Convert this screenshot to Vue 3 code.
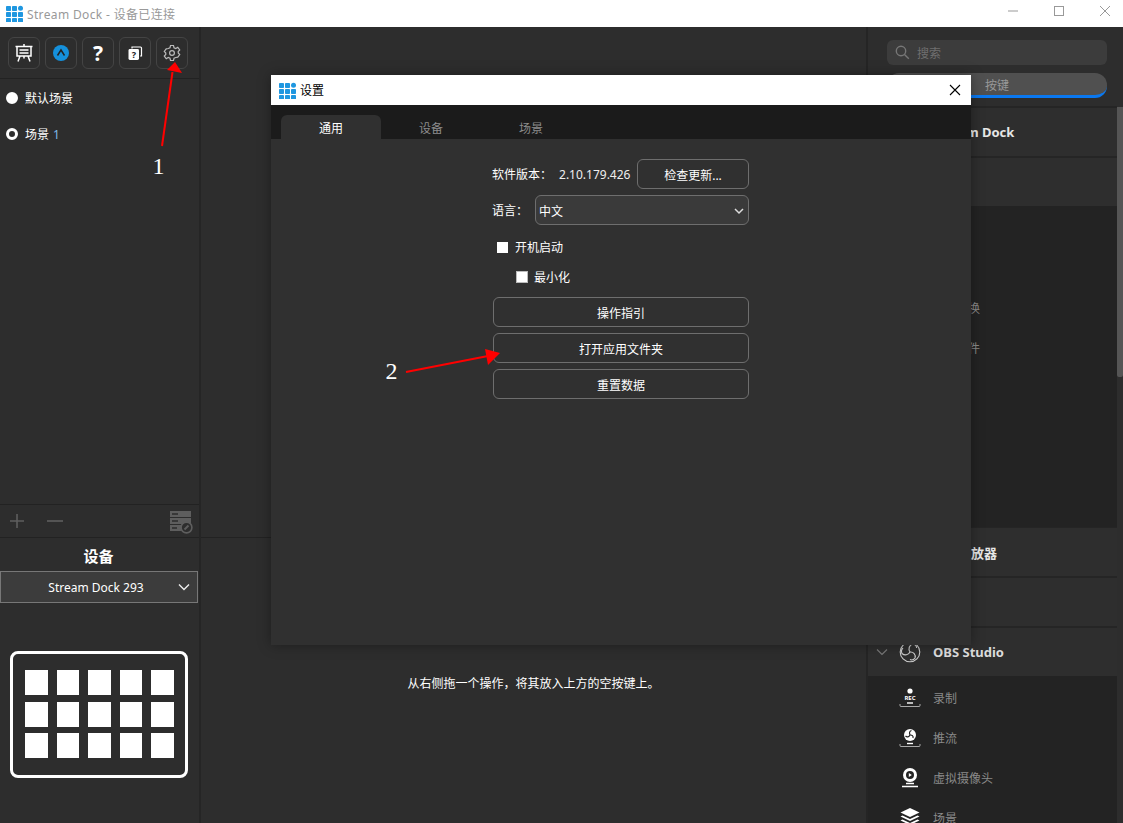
<script setup>
const scenes = [
  { name: '默认场景', filled: true },
  { name: '场景', num: '1', filled: false }
];
const keys = Array.from({ length: 15 }, (_, i) => i);
const tabs = ['通用', '设备', '场景'];
const actionButtons = ['操作指引', '打开应用文件夹', '重置数据'];
const logoCells = [
  [0, 0], [6, 0], [0, 6], [6, 6], [12, 6], [0, 12], [6, 12], [12, 12]
];
const groups = [
  { title: 'Stream Dock', open: false },
  { title: '', open: true, items: ['', '', '场景切换', '打开文件', '', '', '', ''] },
  { title: '媒体播放器', open: false },
  { title: '', open: false }
];
</script>

<template>
  <div class="app">
    <header class="titlebar">
      <svg class="logo" width="17" height="17" viewBox="0 0 17 17">
        <rect v-for="(c, i) in logoCells" :key="i" :x="c[0]" :y="c[1] + 1" width="5" height="5" rx="0.8" fill="#1f97e0" />
        <circle cx="14.5" cy="3.2" r="2.5" fill="#1f97e0" />
      </svg>
      <span class="app-title">Stream Dock - 设备已连接</span>
      <div class="win-controls">
        <svg width="12" height="12" viewBox="0 0 12 12"><path d="M1 6h10" stroke="#999" fill="none" /></svg>
        <svg width="12" height="12" viewBox="0 0 12 12"><rect x="1.5" y="1.5" width="9" height="9" stroke="#999" fill="none" /></svg>
        <svg width="12" height="12" viewBox="0 0 12 12"><path d="M1 1l10 10M11 1L1 11" stroke="#999" fill="none" /></svg>
      </div>
    </header>

    <main class="body">
      <aside class="left">
        <div class="toolbar">
          <button class="tool">
            <svg width="20" height="20" viewBox="0 0 20 20" fill="none" stroke="#fff" stroke-width="1.5">
              <path d="M10 1v2.500M1.500 3.500h17M3 3.500v9.500h14V3.500M6 13l-2 5.500M14 13l2 5.500M10 13v2.500" />
              <path d="M5.500 7h9M5.500 10h9" />
            </svg>
          </button>
          <button class="tool">
            <svg width="18" height="18" viewBox="0 0 18 18">
              <circle cx="9" cy="9" r="8" fill="#1590db" />
              <path d="M5.500 11.500L9 6l3.500 5.500" fill="none" stroke="#222" stroke-width="1.500" />
            </svg>
          </button>
          <button class="tool qmark">?</button>
          <button class="tool">
            <svg width="16" height="16" viewBox="0 0 16 16">
              <path d="M5 3.500V2h8.500a1 1 0 0 1 1 1v8h-1.400" fill="none" stroke="#fff" stroke-width="1.200" />
              <rect x="1.500" y="4" width="10.500" height="11" rx="1.400" fill="#fff" />
              <text x="6.800" y="13" class="doc-q">?</text>
            </svg>
          </button>
          <button class="tool">
            <svg width="18" height="18" viewBox="0 0 24 24" fill="none" stroke="#bbb" stroke-width="1.600">
              <circle cx="12" cy="12" r="3.200" />
              <path d="M10 2h4l.7 3 2.300 1 2.700-1.600 2.600 3.400-2 2.200v2l2 2.200-2.600 3.400L17 18l-2.300 1-.7 3h-4l-.7-3L7 18l-2.700 1.600-2.600-3.400 2-2.200v-2l-2-2.200 2.600-3.400L7 6l2.300-1z" />
            </svg>
          </button>
        </div>

        <ul class="scenes">
          <li v-for="s in scenes" :key="s.name" class="scene">
            <span class="dot" :class="{ filled: s.filled }"></span>
            <span>{{ s.name }}</span>
            <span v-if="s.num" class="scene-num">{{ s.num }}</span>
          </li>
        </ul>

        <div class="scene-bar">
          <svg width="16" height="16" viewBox="0 0 16 16"><path d="M8 1v14M1 8h14" stroke="#5e5e5e" stroke-width="1.600" /></svg>
          <svg class="minus" width="16" height="16" viewBox="0 0 16 16"><path d="M0 8h16" stroke="#5e5e5e" stroke-width="1.600" /></svg>
          <svg class="store" width="24" height="24" viewBox="0 0 24 24">
            <rect x="1" y="1" width="21" height="6" fill="#5e5e5e" />
            <rect x="1" y="8" width="21" height="6" fill="#5e5e5e" />
            <rect x="1" y="15" width="14" height="6" fill="#5e5e5e" />
            <path d="M3 4h6M3 11h6M3 18h5" stroke="#2d2d2d" stroke-width="1.400" />
            <circle cx="17.500" cy="17.500" r="5.400" fill="#2d2d2d" stroke="#5e5e5e" stroke-width="1.600" />
            <path d="M15.500 19.500l4-4" stroke="#5e5e5e" stroke-width="2" />
          </svg>
        </div>

        <section class="device">
          <h3 class="device-title">设备</h3>
          <div class="device-select">
            <span>Stream Dock 293</span>
            <svg width="12" height="8" viewBox="0 0 12 8"><path d="M1 1.500l5 5 5-5" fill="none" stroke="#eee" stroke-width="1.400" /></svg>
          </div>
          <div class="deck">
            <span v-for="k in keys" :key="k" class="deck-key"></span>
          </div>
        </section>
      </aside>

      <section class="center">
        <div class="canvas"></div>
        <div class="hint-area">
          <p class="hint">从右侧拖一个操作，将其放入上方的空按键上。</p>
        </div>
      </section>

      <aside class="right">
        <div class="right-top">
          <div class="search">
            <svg width="15" height="15" viewBox="0 0 15 15" fill="none" stroke="#777" stroke-width="1.400">
              <circle cx="6" cy="6" r="4.700" /><path d="M9.500 9.500l4.300 4.300" />
            </svg>
            <span>搜索</span>
          </div>
          <div class="pill"><span>按键</span></div>
        </div>

        <div class="groups">
          <template v-for="(g, i) in groups" :key="i">
            <div class="group-head">{{ g.title }}</div>
            <div v-if="g.open" class="group-list">
              <div v-for="(item, j) in g.items" :key="j" class="group-item">{{ item }}</div>
            </div>
          </template>

          <div class="group-head obs-head">
            <svg class="chev" width="12" height="8" viewBox="0 0 12 8"><path d="M1 1.500l5 5 5-5" fill="none" stroke="#777" stroke-width="1.200" /></svg>
            <svg width="22" height="22" viewBox="0 0 22 22" fill="none" stroke="#ccc" stroke-width="1.100">
              <circle cx="11" cy="11" r="9.800" />
              <path d="M11 11c-2-3-1-7 3-8 2.500.6 3.600 2.400 3.600 4" />
              <path d="M11 11c3.500-.3 6 2.500 5 6-1.400 2-3.400 2.300-5 1.600" />
              <path d="M11 11c-1.600 3-5.200 4-8 1.500-1-2.200-.4-4.200 1-5.500" />
            </svg>
            <span>OBS Studio</span>
          </div>
          <div class="group-list obs-list">
            <div class="group-item with-icon">
              <svg width="22" height="20" viewBox="0 0 22 20">
                <circle cx="11" cy="3" r="2.600" fill="#fff" />
                <text x="11" y="12" class="rec">REC</text>
                <path d="M8 15h6" stroke="#fff" stroke-width="1.400" />
                <path d="M1 16v1.500q0 1 1 1h18q1 0 1-1V16" fill="none" stroke="#ccc" stroke-width="0.800" />
              </svg>
              <span>录制</span>
            </div>
            <div class="group-item with-icon">
              <svg width="22" height="20" viewBox="0 0 22 20">
                <circle cx="11" cy="7" r="6" fill="#fff" />
                <path d="M11 7c-1-2-.5-4 1.500-4.500M11 7c2-.2 3.500 1 3 3M11 7c-1 2-3 2.500-4.500 1" fill="none" stroke="#232323" stroke-width="1.200" />
                <path d="M8 15.500h6" stroke="#fff" stroke-width="1.400" />
                <path d="M1 16v1.500q0 1 1 1h18q1 0 1-1V16" fill="none" stroke="#ccc" stroke-width="0.800" />
              </svg>
              <span>推流</span>
            </div>
            <div class="group-item with-icon">
              <svg width="22" height="20" viewBox="0 0 22 20">
                <circle cx="11" cy="7" r="7" fill="#fff" />
                <circle cx="11" cy="7" r="4" fill="#232323" />
                <path d="M9.800 5v4l3-2z" fill="#fff" />
                <path d="M7 15.500h8M3 18.500h16" stroke="#fff" stroke-width="1.500" />
              </svg>
              <span>虚拟摄像头</span>
            </div>
            <div class="group-item with-icon">
              <svg width="22" height="20" viewBox="0 0 22 20" fill="#fff">
                <path d="M11 0l9.500 4.500L11 9 1.500 4.500z" />
                <path d="M3.500 7.500L11 11l7.500-3.500 2 1L11 13 1.500 8.500z" />
                <path d="M3.500 11.500L11 15l7.500-3.500 2 1L11 17 1.500 12.500z" />
              </svg>
              <span>场景</span>
            </div>
          </div>
        </div>
        <div class="scroll-thumb"></div>
      </aside>
    </main>

    <!-- 设置弹窗 -->
    <div class="dialog">
      <div class="dialog-title">
        <svg width="17" height="17" viewBox="0 0 17 17">
          <rect v-for="(c, i) in logoCells" :key="i" :x="c[0]" :y="c[1] + 1" width="5" height="5" rx="0.8" fill="#1f97e0" />
          <circle cx="14.500" cy="3.200" r="2.500" fill="#1f97e0" />
        </svg>
        <span>设置</span>
        <svg class="dialog-close" width="12" height="12" viewBox="0 0 12 12"><path d="M1 1l10 10M11 1L1 11" stroke="#000" stroke-width="1.100" fill="none" /></svg>
      </div>
      <div class="dialog-tabs">
        <div v-for="(t, i) in tabs" :key="t" class="dialog-tab" :class="{ active: i === 0 }">{{ t }}</div>
      </div>
      <div class="dialog-body">
        <div class="form">
          <div class="row version-row">
            <span>软件版本：</span>
            <span class="version">2.10.179.426</span>
            <button class="btn update">检查更新...</button>
          </div>
          <div class="row lang-row">
            <span>语言：</span>
            <div class="lang-select">
              <span>中文</span>
              <svg width="10" height="7" viewBox="0 0 10 7"><path d="M1 1l4 4 4-4" fill="none" stroke="#ddd" stroke-width="1.500" /></svg>
            </div>
          </div>
          <label class="check check-main"><span class="box"></span>开机启动</label>
          <label class="check check-sub"><span class="box"></span>最小化</label>
          <div class="actions">
            <button v-for="b in actionButtons" :key="b" class="btn">{{ b }}</button>
          </div>
        </div>
      </div>
    </div>

    <!-- 标注箭头 -->
    <svg class="marks" width="1123" height="823" viewBox="0 0 1123 823">
      <path d="M162 146L172.500 72" stroke="#f00" stroke-width="2" fill="none" />
      <path d="M175 62L182 73 167 70z" fill="#f00" />
      <path d="M406 372L488 356" stroke="#f00" stroke-width="2" fill="none" />
      <path d="M500 353L488 365 485 349z" fill="#f00" />
      <text x="158.500" y="174" class="mark-num">1</text>
      <text x="391.500" y="379" class="mark-num">2</text>
    </svg>
  </div>
</template>

<style scoped>
.app {
  position: relative;
  width: 1123px;
  height: 823px;
  overflow: hidden;
  display: flex;
  flex-direction: column;
  background: #2d2d2d;
  color: #fff;
  font-family: "Noto Sans", "Noto Sans CJK SC", sans-serif;
  font-size: 12px;
}
button {
  font-family: inherit;
  color: inherit;
  background: none;
  cursor: pointer;
}

.titlebar {
  height: 27px;
  flex: none;
  background: #fff;
  display: flex;
  align-items: center;
  padding-left: 6px;
}
.logo { margin-right: 4px; }
.app-title { color: #999; font-size: 12px; letter-spacing: 0.35px; }
.win-controls {
  margin-left: auto;
  margin-right: 12px;
  display: flex;
  gap: 34px;
  margin-top: -5px;
}

.body { flex: 1; display: flex; min-height: 0; }

.left {
  width: 199px;
  flex: none;
  border-right: 2px solid #252525;
  display: flex;
  flex-direction: column;
}
.toolbar {
  height: 52px;
  flex: none;
  display: flex;
  align-items: center;
  gap: 5px;
  padding-left: 8px;
  border-bottom: 1px solid #222;
  box-sizing: border-box;
}
.tool {
  width: 32px;
  height: 32px;
  padding: 0;
  border: 1px solid #444;
  border-radius: 6px;
  display: flex;
  align-items: center;
  justify-content: center;
}
.qmark { font-size: 21px; font-weight: 700; }
.doc-q { font-size: 9px; font-weight: 700; fill: #222; text-anchor: middle; }
.scenes {
  flex: 1;
  list-style: none;
  margin: 0;
  padding: 1px 0 0;
}
.scene {
  height: 36px;
  display: flex;
  align-items: center;
  padding-left: 6px;
  gap: 7px;
}
.scene-num { color: #7fb9e6; margin-left: -3px; }
.dot {
  width: 12px;
  height: 12px;
  box-sizing: border-box;
  border-radius: 50%;
  border: 3px solid #fff;
}
.dot.filled { background: #fff; }
.scene-bar {
  height: 34px;
  flex: none;
  box-sizing: border-box;
  border-top: 1px solid #222;
  border-bottom: 1px solid #222;
  display: flex;
  align-items: center;
  padding-left: 9px;
}
.minus { margin-left: 22px; }
.store { margin-left: auto; margin-right: 6px; margin-top: 2px; }
.device { flex: none; height: 285px; }
.device-title {
  margin: 0;
  padding: 7px 2px 0 0;
  height: 33px;
  box-sizing: border-box;
  text-align: center;
  font-size: 15px;
  font-weight: 700;
  line-height: 22px;
}
.device-select {
  width: 198px;
  height: 32px;
  box-sizing: border-box;
  background: #3c3c3c;
  border: 1px solid #777;
  display: flex;
  align-items: center;
  justify-content: center;
  position: relative;
  padding-right: 6px;
}
.device-select svg { position: absolute; right: 7px; top: 11px; }
.deck {
  margin: 48px 0 0 10px;
  width: 178px;
  height: 127px;
  box-sizing: border-box;
  border: 3px solid #fff;
  border-radius: 8px;
  padding: 16px 12px;
  display: grid;
  grid-template-columns: repeat(5, 22.500px);
  grid-template-rows: repeat(3, 25px);
  column-gap: 9px;
  row-gap: 6.500px;
}
.deck-key { background: #fff; }

.center {
  flex: 1;
  display: flex;
  flex-direction: column;
}
.canvas {
  height: 510px;
  flex: none;
  border-bottom: 1px solid #222;
}
.hint-area { flex: 1; }
.hint {
  margin: 137px 0 0;
  text-align: center;
  line-height: 18px;
}

.right {
  width: 257px;
  box-sizing: border-box;
  flex: none;
  border-left: 2px solid #252525;
  background: #2d2d2d;
  position: relative;
  display: flex;
  flex-direction: column;
}
.right-top {
  height: 79px;
  flex: none;
  box-sizing: border-box;
  padding: 13px 16px 0 19px;
  display: flex;
  flex-direction: column;
  gap: 8px;
}
.search {
  height: 25px;
  border-radius: 6px;
  background: #3c3c3c;
  color: #6f6f6f;
  display: flex;
  align-items: center;
  gap: 7px;
  padding-left: 8px;
}
.pill {
  height: 25px;
  box-sizing: border-box;
  border-radius: 12px;
  background: #505050;
  border-bottom: 3px solid #0a78f0;
  color: #999;
  display: flex;
  align-items: center;
  justify-content: center;
  padding-top: 2px;
}
.groups {
  flex: 1;
  width: 249px;
  overflow: hidden;
  background: #252525;
  padding-top: 2px;
}
.group-head {
  height: 48px;
  box-sizing: border-box;
  background: #2e2e2e;
  margin-bottom: 2px;
  display: flex;
  align-items: center;
  padding-left: 64px;
  font-size: 13px;
  font-weight: 700;
  color: #e6e6e6;
}
.group-list {
  background: #232323;
  height: 321px;
  margin-top: -2px;
  margin-bottom: 1px;
  padding-top: 2px;
  box-sizing: border-box;
}
.group-item {
  height: 40px;
  display: flex;
  align-items: center;
  padding-left: 64px;
  color: #8a8a8a;
}
.obs-head { padding-left: 8px; margin-bottom: 0; color: #dcdcdc; }
.obs-head .chev { margin-right: 11px; }
.obs-head svg + svg { margin-right: 12px; }
.obs-list { height: 160px; margin-top: 0; padding-top: 2px; }
.with-icon { padding-left: 31px; gap: 12px; }
.rec { font-size: 6px; font-weight: 700; fill: #fff; text-anchor: middle; }
.scroll-thumb {
  position: absolute;
  right: 0;
  top: 80px;
  width: 6px;
  height: 270px;
  background: #555;
  border-radius: 0 0 2px 2px;
}

.dialog {
  position: absolute;
  left: 271px;
  top: 75px;
  width: 700px;
  height: 570px;
  background: #303030;
  box-shadow: 0 0 12px rgba(0, 0, 0, 0.35);
  display: flex;
  flex-direction: column;
}
.dialog-title {
  height: 30px;
  flex: none;
  background: #fff;
  color: #000;
  display: flex;
  align-items: center;
  gap: 4px;
  padding: 0 10px 0 8px;
}
.dialog-close { margin-left: auto; }
.dialog-tabs {
  height: 34px;
  flex: none;
  background: #1b1b1b;
  display: flex;
  align-items: flex-end;
  padding-left: 10px;
}
.dialog-tab {
  width: 100px;
  height: 24px;
  padding-top: 2px;
  box-sizing: border-box;
  display: flex;
  align-items: center;
  justify-content: center;
  color: #8c8c8c;
  border-radius: 6px 6px 0 0;
}
.dialog-tab.active { background: #303030; color: #fff; }
.dialog-body { flex: 1; display: flex; justify-content: center; padding: 20px 1px 0 0; }
.form { width: 257px; }
.row { display: flex; align-items: center; }
.version-row { height: 30px; }
.version { margin-left: 7px; flex: 1; color: #eee; white-space: nowrap; }
.btn {
  height: 30px;
  padding: 2px 0 0;
  box-sizing: border-box;
  border: 1px solid #6e6e6e;
  border-radius: 6px;
  font-size: 12px;
  display: flex;
  align-items: center;
  justify-content: center;
}
.update { width: 112px; flex: none; }
.lang-row { height: 30px; margin-top: 6px; }
.lang-select {
  margin-left: 7px;
  flex: 1;
  height: 30px;
  box-sizing: border-box;
  border: 1px solid #6e6e6e;
  border-radius: 6px;
  background: #3a3a3a;
  display: flex;
  align-items: center;
  justify-content: space-between;
  padding: 2px 4px 0 3px;
}
.check { display: flex; align-items: center; gap: 7px; }
.box { background: #fff; flex: none; }
.check-main { margin: 13px 0 0 5px; height: 18px; }
.check-main .box { width: 11px; height: 11px; }
.check-sub { margin: 12px 0 0 24px; height: 18px; gap: 6px; }
.check-sub .box { width: 12px; height: 12px; border: 1px solid #bbb; box-sizing: border-box; }
.actions {
  margin: 11px 0 0 1px;
  display: flex;
  flex-direction: column;
  gap: 6px;
}

.marks { position: absolute; left: 0; top: 0; pointer-events: none; }
.mark-num {
  font-family: "Liberation Serif", serif;
  font-size: 24px;
  fill: #fff;
  text-anchor: middle;
}
</style>
